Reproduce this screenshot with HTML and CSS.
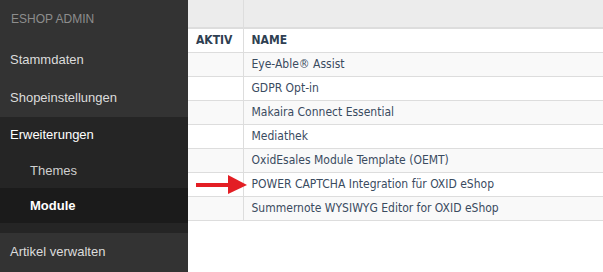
FILE: index.html
```html
<!DOCTYPE html>
<html>
<head>
<meta charset="utf-8">
<link rel="stylesheet" href="styles.css">
</head>
<body>
<div class="app">
  <nav class="sidebar">
    <div class="brand">ESHOP ADMIN</div>
    <div class="item">Stammdaten</div>
    <div class="item">Shopeinstellungen</div>
    <div class="section">
      <div class="item item-open">Erweiterungen</div>
      <div class="sub">Themes</div>
      <div class="sub sub-active">Module</div>
    </div>
    <div class="item">Artikel verwalten</div>
  </nav>
  <main class="content">
    <table class="grid">
      <tr class="filter"><td class="c-aktiv"></td><td></td></tr>
      <tr class="head"><th class="c-aktiv">AKTIV</th><th>NAME</th></tr>
      <tr class="odd"><td class="c-aktiv"></td><td>Eye-Able® Assist</td></tr>
      <tr><td class="c-aktiv"></td><td>GDPR Opt-in</td></tr>
      <tr class="odd"><td class="c-aktiv"></td><td>Makaira Connect Essential</td></tr>
      <tr><td class="c-aktiv"></td><td>Mediathek</td></tr>
      <tr class="odd"><td class="c-aktiv"></td><td>OxidEsales Module Template (OEMT)</td></tr>
      <tr><td class="c-aktiv arrow-cell"><svg class="arrow" width="52" height="20" viewBox="0 0 52 20"><rect x="0" y="8" width="33" height="4" fill="#e31e24"/><polygon points="32,0 51,10 32,19" fill="#e31e24"/></svg></td><td>POWER CAPTCHA Integration für OXID eShop</td></tr>
      <tr class="odd"><td class="c-aktiv"></td><td>Summernote WYSIWYG Editor for OXID eShop</td></tr>
    </table>
  </main>
</div>
</body>
</html>
```
FILE: styles.css
```css
* { box-sizing: border-box; }
html, body { margin: 0; padding: 0; }
body { width: 603px; height: 272px; overflow: hidden; background: #fff; }
.app { display: flex; height: 272px; }
.sidebar {
  width: 188px;
  flex: none;
  background: #333333;
  font-family: "Liberation Sans", Arial, sans-serif;
  font-size: 13px;
  color: #dcdcdc;
}
.brand {
  height: 41px;
  padding: 12px 0 0 11px;
  font-size: 12px;
  color: #8d8d8d;
  line-height: 14px;
}
.item {
  height: 38px;
  line-height: 38px;
  padding-left: 10px;
}
.section {
  background: #252525;
  padding-bottom: 10px;
}
.item-open {
  height: 36px;
  line-height: 36px;
  color: #ffffff;
}
.sub {
  height: 35px;
  line-height: 35px;
  padding-left: 30px;
  color: #d0d0d0;
}
.sub-active {
  background: #1b1b1b;
  color: #ffffff;
  font-weight: bold;
}
.content { flex: 1; }
.grid {
  width: 100%;
  border-collapse: collapse;
  font-family: "DejaVu Sans Condensed", "DejaVu Sans", sans-serif;
  font-size: 12px;
  color: #3a4b5f;
}
.grid td, .grid th {
  height: 24px;
  padding: 0 0 0 8px;
  border-bottom: 1px solid #dddddd;
  text-align: left;
  white-space: nowrap;
}
.grid .c-aktiv { width: 55px; border-right: 1px solid #dddddd; }
.grid .filter td { height: 28px; background: #ececec; border-bottom: 2px solid #dddddd; }
.grid .head th { font-weight: bold; color: #2f3f52; height: 24px; }
.grid .odd td { background: #f9f9f9; }
.arrow-cell { position: relative; }
.arrow { position: absolute; left: 8px; top: 2px; }
```
